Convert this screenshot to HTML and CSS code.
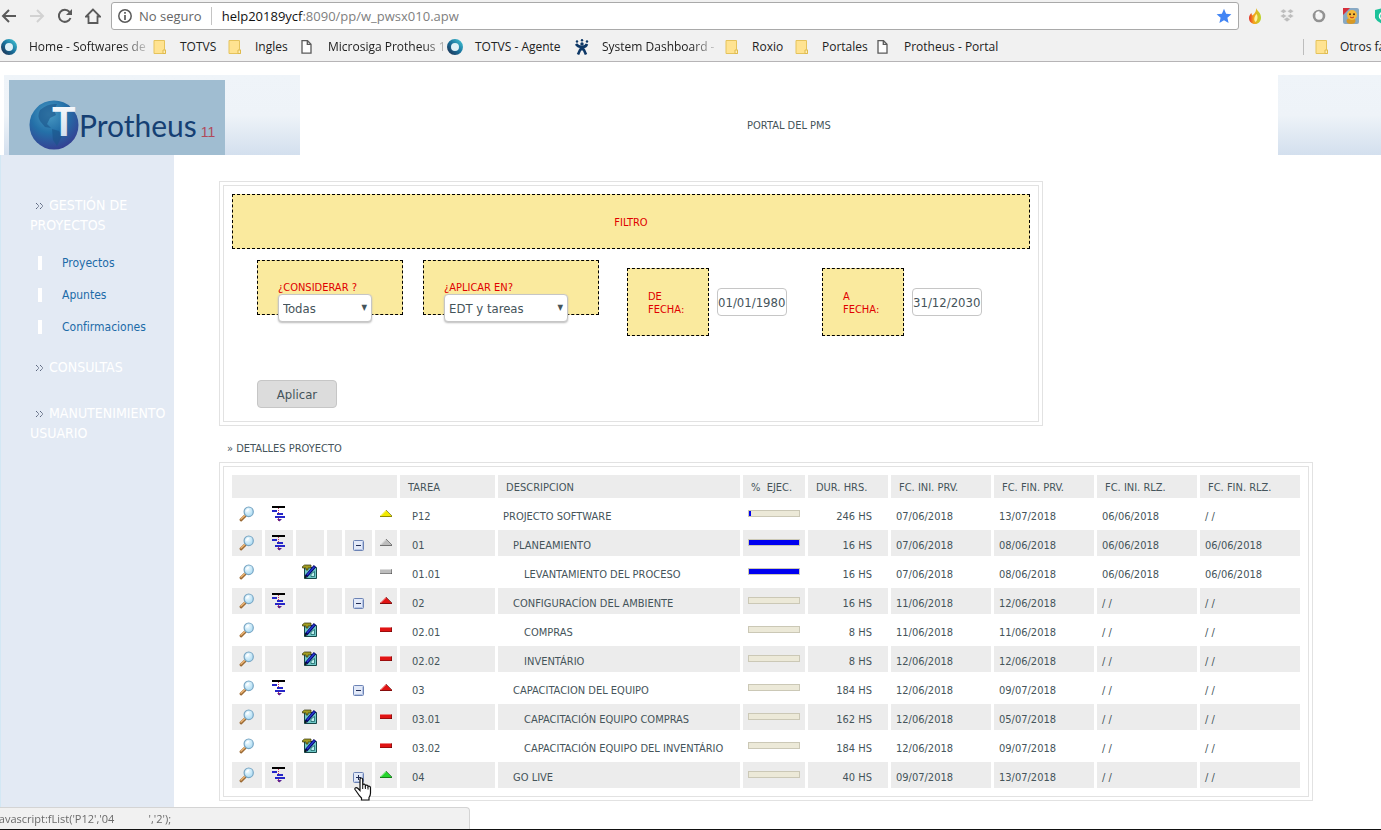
FILE: index.html
```html
<!DOCTYPE html>
<html lang="es">
<head>
  <meta charset="UTF-8">
  <meta name="viewport" content="width=device-width, initial-scale=1.0">
  <title>Portal del PMS</title>
  <link rel="stylesheet" href="styles.css">
</head>
<body>
  <svg class="sprite" aria-hidden="true">
    <defs>
      <radialGradient id="lens" cx="40%" cy="35%" r="70%">
        <stop offset="0" stop-color="#f4fcff"/>
        <stop offset="1" stop-color="#a5d8f2"/>
      </radialGradient>
      <radialGradient id="globe" cx="40%" cy="28%" r="75%">
        <stop offset="0" stop-color="#4a9bc4"/>
        <stop offset="0.5" stop-color="#2470a8"/>
        <stop offset="1" stop-color="#353f92"/>
      </radialGradient>
      <linearGradient id="ring" x1="0" y1="1" x2="1" y2="0">
        <stop offset="0" stop-color="#1d3a5c"/>
        <stop offset="0.5" stop-color="#19719c"/>
        <stop offset="1" stop-color="#3bb8cc"/>
      </linearGradient>
      <linearGradient id="flame" x1="0" y1="0" x2="1" y2="0">
        <stop offset="0" stop-color="#e2322c"/>
        <stop offset="0.4" stop-color="#f7a51c"/>
        <stop offset="1" stop-color="#b9d52a"/>
      </linearGradient>
      <linearGradient id="letter" x1="0" y1="0" x2="0" y2="1">
        <stop offset="0" stop-color="#ffffff"/>
        <stop offset="1" stop-color="#c9d9ea"/>
      </linearGradient>
    </defs>
    <symbol id="i-zoom" viewBox="0 0 16 16">
      <path d="M7.500 9.500L3 13.800" stroke="#9b6a35" stroke-width="3" stroke-linecap="round"/>
      <path d="M7.300 9L3 13" stroke="#eeb777" stroke-width="1.400" stroke-linecap="round"/>
      <ellipse cx="10.700" cy="5.800" rx="4.600" ry="4.800" fill="url(#lens)" stroke="#78a6c4" stroke-width="1.200"/>
      <path d="M8.500 5.500q.6-2 2.400-2.200" stroke="#fff" stroke-width="1.200" fill="none"/>
    </symbol>
    <symbol id="i-gantt" viewBox="0 0 16 16">
      <path d="M7.500 2v14" stroke="#c0305a" stroke-width="1" stroke-dasharray="1 1"/>
      <path d="M1 0h13v2H1z" fill="#000"/>
      <path d="M1 4h5v2H1zM6 7h6v2H6zM4 10h10v2H4z" fill="#2626c8"/>
      <path d="M6 13h5l-2.500 2.500z" fill="#5a2393"/>
    </symbol>
    <symbol id="i-edit" viewBox="0 0 16 16">
      <path d="M2.500 3.500h12v11h-12z" fill="#6fc8c8" stroke="#174848" stroke-width="1"/>
      <path d="M9 12.500v-2.500l3.500-2.500v5z" fill="#bdeeee" stroke="#1b6767" stroke-width=".8"/>
      <path d="M.5 2.500l2-1.500h6.500v3H6V6H4V4H.5z" fill="#a09c22" stroke="#33330a" stroke-width=".7"/>
      <path d="M4 12.500L13 2" stroke="#000060" stroke-width="3.200"/>
      <path d="M5 11L12.500 2.500" stroke="#2639d4" stroke-width="1.500"/>
      <path d="M2.500 14.500l.5-3 2.200 1.700z" fill="#111"/>
    </symbol>
    <symbol id="i-minus" viewBox="0 0 11 11">
      <rect x=".5" y=".5" width="10" height="10" rx="1" fill="#e2e9f8" stroke="#6c83b5"/>
      <path d="M1.500 9.500h8v-8" stroke="#b5c4e4" fill="none"/>
      <path d="M3 5.500h5" stroke="#222d55"/>
    </symbol>
    <symbol id="i-plus" viewBox="0 0 11 11">
      <rect x=".5" y=".5" width="10" height="10" rx="1" fill="#e2e9f8" stroke="#6c83b5"/>
      <path d="M1.500 9.500h8v-8" stroke="#b5c4e4" fill="none"/>
      <path d="M3 5.500h5M5.500 3v5" stroke="#222d55"/>
    </symbol>
    <symbol id="i-up" viewBox="0 0 12 7">
      <path d="M0 6L6 0l6 6v1H0z" fill="currentColor"/>
      <path d="M1 5.500L6 .6" stroke="#fff" stroke-opacity=".5" fill="none"/>
      <path d="M0 6.500h12M6 0l6 6" stroke="#000" stroke-opacity=".4" fill="none"/>
    </symbol>
    <symbol id="i-flat" viewBox="0 0 12 5">
      <path d="M0 0h12v5H0z" fill="currentColor"/>
      <path d="M0 .5h12" stroke="#fff" stroke-opacity=".45"/>
      <path d="M0 4.500h12M11.500 0v5" stroke="#000" stroke-opacity=".3"/>
    </symbol>
    <symbol id="i-folder" viewBox="0 0 16 16">
      <path d="M2 1.500h10.500v9l1 .5v3.500H2z" fill="#ffe391" stroke="#e5c35c"/>
      <path d="M11 14.500v-3.500h2.500v3.500z" fill="#ffeeb8" stroke="#dfba4d"/>
    </symbol>
    <symbol id="i-page" viewBox="0 0 16 16">
      <path d="M2 1.700h5.500l3.500 3.500v9H2z" fill="#fdfdfd" stroke="#5a5a5a" stroke-width="1.300"/>
      <path d="M7.300 1.700v3.700H11" fill="none" stroke="#5a5a5a" stroke-width="1.300"/>
    </symbol>
    <symbol id="i-totvs" viewBox="0 0 16 16">
      <circle cx="8" cy="8" r="6" fill="#dff1f7" stroke="url(#ring)" stroke-width="4"/>
    </symbol>
    <symbol id="i-chev" viewBox="0 0 9 8">
      <path d="M1 1l3 3-3 3M5 1l3 3-3 3" fill="none" stroke="#44506a" stroke-width="1" stroke-dasharray="1.200 .6"/>
    </symbol>
  </svg>

  <div class="browser">
    <div class="toolbar">
      <button type="button" class="tool" aria-label="Atrás"><svg viewBox="0 0 16 16"><path d="M15 8H2M8 2L2 8l6 6" fill="none" stroke="#5a5a5a" stroke-width="2"/></svg></button>
      <button type="button" class="tool" aria-label="Adelante"><svg viewBox="0 0 16 16"><path d="M1 8h13M8 2l6 6-6 6" fill="none" stroke="#d2d2d2" stroke-width="2"/></svg></button>
      <button type="button" class="tool" aria-label="Recargar"><svg viewBox="0 0 16 16"><path d="M13.500 10A6 6 0 1 1 12.500 4" fill="none" stroke="#5a5a5a" stroke-width="2"/><path d="M15 1v6H9z" fill="#5a5a5a"/></svg></button>
      <button type="button" class="tool" aria-label="Inicio"><svg viewBox="0 0 16 16"><path d="M8 1.500L1 8.500h2.500V15h9V8.500H15z" fill="none" stroke="#5a5a5a" stroke-width="1.800"/></svg></button>
      <div class="omnibox">
        <svg class="info" viewBox="0 0 14 14"><circle cx="7" cy="7" r="6.200" fill="none" stroke="#5a5a5a" stroke-width="1.500"/><path d="M7 6v5M7 3v1.800" stroke="#5a5a5a" stroke-width="1.700"/></svg>
        <span class="secure">No seguro</span>
        <label class="host" for="url">help20189ycf</label>
        <input id="url" class="url" type="text" value=":8090/pp/w_pwsx010.apw">
        <svg class="star" viewBox="0 0 16 16"><path d="M8 .8l2.100 4.900 5.300.5-4 3.500 1.200 5.200L8 12.200l-4.600 2.700 1.200-5.200-4-3.500 5.300-.5z" fill="#4285f4"/></svg>
      </div>
      <div class="extensions">
        <svg viewBox="0 0 16 16"><path d="M9 0c1 3 5 4.500 5 9.500C14 13.500 11.500 16 8 16s-6-2.500-6-6c0-2.500 1.500-4 2.500-5 0 1 .5 2 1 2.500C7.500 5.500 9.500 3.500 9 0z" fill="url(#flame)"/><path d="M9.500 6c1.500 2 1.500 6-1 8-2-2-1.500-5 1-8z" fill="#fff3a0"/></svg>
        <svg viewBox="0 0 16 16"><path d="M4.500 1L1 3.200 4.500 5.500 8 3.200zM11.500 1L8 3.200l3.500 2.300L15 3.200zM4.500 5.800L1 8l3.500 2.300L8 8zM11.500 5.800L8 8l3.500 2.300L15 8zM8 9l-3.500 2.300L8 14l3.500-2.700z" fill="#bdbdbd" stroke="#f1f1f1" stroke-width=".6"/></svg>
        <svg viewBox="0 0 16 16"><circle cx="8" cy="8" r="5" fill="#f4f4f4" stroke="#929292" stroke-width="2.600"/><path d="M5 6a3.500 3.500 0 0 1 3.500-2" stroke="#fff" stroke-width="1.500" fill="none"/></svg>
        <svg viewBox="0 0 16 16"><rect width="16" height="16" rx="2" fill="#88a9c4"/><path d="M0 0h7L0 7z" fill="#d62f3b"/><ellipse cx="8" cy="13" rx="4.500" ry="3" fill="#d99a26"/><circle cx="9" cy="7" r="5" fill="#f5b93b"/><circle cx="7" cy="6.300" r="1" fill="#4a2a10"/><circle cx="11" cy="6.300" r="1" fill="#4a2a10"/><path d="M7 9q2 1.800 4 0" stroke="#c23616" fill="none"/></svg>
        <svg viewBox="0 0 16 16"><path d="M0 2l8-2 8 2v8q-2 4-8 6-6-2-8-6z" fill="#1cc29a"/><circle cx="8" cy="8" r="3.500" fill="none" stroke="#fff" stroke-width="1.500"/></svg>
      </div>
    </div>
    <nav class="bookmarks">
      <a class="fade" href="#"><svg><use href="#i-totvs"/></svg><span>Home - Softwares de</span></a>
      <a href="#"><svg><use href="#i-folder"/></svg><span>TOTVS</span></a>
      <a href="#"><svg><use href="#i-folder"/></svg><span>Ingles</span></a>
      <a class="fade" href="#"><svg><use href="#i-page"/></svg><span>Microsiga Protheus 1</span></a>
      <a href="#"><svg><use href="#i-totvs"/></svg><span>TOTVS - Agente</span></a>
      <a class="fade" href="#"><svg viewBox="0 0 16 16"><path d="M2 5q2 3 6 3t5-3M4 15.500l2-4.500 6-4M12 15.500L10 11 4 7" fill="none" stroke="#0d3766" stroke-width="2.600"/><circle cx="3" cy="2.500" r="1.200" fill="#0d3766"/><circle cx="8" cy="1.300" r="1.200" fill="#0d3766"/><circle cx="8" cy="5" r="1.700" fill="#0d3766"/><circle cx="13" cy="2.500" r="1.200" fill="#0d3766"/></svg><span>System Dashboard -</span></a>
      <a href="#"><svg><use href="#i-folder"/></svg><span>Roxio</span></a>
      <a href="#"><svg><use href="#i-folder"/></svg><span>Portales</span></a>
      <a href="#"><svg><use href="#i-page"/></svg><span>Protheus - Portal</span></a>
      <a class="others" href="#"><svg><use href="#i-folder"/></svg><span>Otros favoritos</span></a>
    </nav>
  </div>

  <header class="top">
    <div class="top-left">
      <div class="logo">
        <svg class="globe" viewBox="0 0 50 50">
          <circle cx="25" cy="25" r="24.500" fill="url(#globe)"/>
          <path d="M11 10q8-7 17-6l-3 6 2 5-6 3-3 6 4 4-6-1-5-6q-3-5 0-11zM23 29l7 2 3 5-5 10-4-6z" fill="#1b5488" opacity=".6"/>
          <text x="23" y="36" class="globe-letter" fill="url(#letter)">T</text>
        </svg>
        <span class="logo-name">Protheus</span><span class="logo-version">11</span>
      </div>
    </div>
    <h1>PORTAL DEL PMS</h1>
    <div class="top-right"></div>
  </header>

  <div class="layout">
    <aside class="sidebar">
      <a class="group" href="#"><svg><use href="#i-chev"/></svg>GESTIÓN DE PROYECTOS</a>
      <ul>
        <li><a href="#">Proyectos</a></li>
        <li><a href="#">Apuntes</a></li>
        <li><a href="#">Confirmaciones</a></li>
      </ul>
      <a class="group" href="#"><svg><use href="#i-chev"/></svg>CONSULTAS</a>
      <a class="group" href="#"><svg><use href="#i-chev"/></svg>MANUTENIMIENTO USUARIO</a>
    </aside>

    <main>
      <form class="panel filter">
        <div class="panel-body">
          <div class="filter-title">FILTRO</div>
          <div class="filter-row">
            <div class="field">
              <label for="considerar">¿CONSIDERAR ?</label>
              <span class="select"><select id="considerar"><option>Todas</option></select></span>
            </div>
            <div class="field field-wide">
              <label for="aplicar">¿APLICAR EN?</label>
              <span class="select"><select id="aplicar"><option>EDT y tareas</option></select></span>
            </div>
            <div class="date">
              <label for="desde">DE FECHA:</label>
              <input id="desde" type="text" value="01/01/1980">
            </div>
            <div class="date">
              <label for="hasta">A FECHA:</label>
              <input id="hasta" type="text" value="31/12/2030">
            </div>
          </div>
          <button type="button" class="apply">Aplicar</button>
        </div>
      </form>

      <h2>» DETALLES PROYECTO</h2>

      <div class="panel details">
        <div class="panel-body">
          <table>
            <colgroup>
              <col class="c-zoom"><col class="c-tool"><col class="c-tool"><col class="c-gap"><col class="c-tree"><col class="c-state">
              <col class="c-task"><col><col class="c-exec"><col class="c-hours">
              <col class="c-date"><col class="c-date"><col class="c-date"><col class="c-date">
            </colgroup>
            <thead>
              <tr>
                <th colspan="6"></th>
                <th>TAREA</th><th>DESCRIPCION</th><th>%&nbsp; EJEC.</th><th>DUR. HRS.</th>
                <th>FC. INI. PRV.</th><th>FC. FIN. PRV.</th><th>FC. INI. RLZ.</th><th>FC. FIN. RLZ.</th>
              </tr>
            </thead>
            <tbody>
              <tr>
                <td class="ic"><a href="#" aria-label="Ver"><svg><use href="#i-zoom"/></svg></a></td>
                <td class="ic"><a href="#" aria-label="Gantt"><svg><use href="#i-gantt"/></svg></a></td>
                <td></td><td></td><td></td>
                <td class="state yellow"><svg class="up"><use href="#i-up"/></svg></td>
                <td class="task">P12</td><td>PROJECTO SOFTWARE</td>
                <td class="exec"><div class="bar"><div style="width: 4%"></div></div></td>
                <td class="hours">246 HS</td><td>07/06/2018</td><td>13/07/2018</td><td>06/06/2018</td><td>/ /</td>
              </tr>
              <tr>
                <td class="ic"><a href="#" aria-label="Ver"><svg><use href="#i-zoom"/></svg></a></td>
                <td class="ic"><a href="#" aria-label="Gantt"><svg><use href="#i-gantt"/></svg></a></td>
                <td></td><td></td>
                <td class="tree"><button type="button" aria-label="Contraer"><svg><use href="#i-minus"/></svg></button></td>
                <td class="state grey"><svg class="up"><use href="#i-up"/></svg></td>
                <td class="task">01</td><td class="level-1">PLANEAMIENTO</td>
                <td class="exec"><div class="bar"><div style="width: 100%"></div></div></td>
                <td class="hours">16 HS</td><td>07/06/2018</td><td>08/06/2018</td><td>06/06/2018</td><td>06/06/2018</td>
              </tr>
              <tr>
                <td class="ic"><a href="#" aria-label="Ver"><svg><use href="#i-zoom"/></svg></a></td>
                <td></td>
                <td class="ic"><a href="#" aria-label="Editar"><svg><use href="#i-edit"/></svg></a></td>
                <td></td><td></td>
                <td class="state grey"><svg class="flat"><use href="#i-flat"/></svg></td>
                <td class="task">01.01</td><td class="level-2">LEVANTAMIENTO DEL PROCESO</td>
                <td class="exec"><div class="bar"><div style="width: 100%"></div></div></td>
                <td class="hours">16 HS</td><td>07/06/2018</td><td>08/06/2018</td><td>06/06/2018</td><td>06/06/2018</td>
              </tr>
              <tr>
                <td class="ic"><a href="#" aria-label="Ver"><svg><use href="#i-zoom"/></svg></a></td>
                <td class="ic"><a href="#" aria-label="Gantt"><svg><use href="#i-gantt"/></svg></a></td>
                <td></td><td></td>
                <td class="tree"><button type="button" aria-label="Contraer"><svg><use href="#i-minus"/></svg></button></td>
                <td class="state red"><svg class="up"><use href="#i-up"/></svg></td>
                <td class="task">02</td><td class="level-1">CONFIGURACÍON DEL AMBIENTE</td>
                <td class="exec"><div class="bar"></div></td>
                <td class="hours">16 HS</td><td>11/06/2018</td><td>12/06/2018</td><td>/ /</td><td>/ /</td>
              </tr>
              <tr>
                <td class="ic"><a href="#" aria-label="Ver"><svg><use href="#i-zoom"/></svg></a></td>
                <td></td>
                <td class="ic"><a href="#" aria-label="Editar"><svg><use href="#i-edit"/></svg></a></td>
                <td></td><td></td>
                <td class="state red"><svg class="flat"><use href="#i-flat"/></svg></td>
                <td class="task">02.01</td><td class="level-2">COMPRAS</td>
                <td class="exec"><div class="bar"></div></td>
                <td class="hours">8 HS</td><td>11/06/2018</td><td>11/06/2018</td><td>/ /</td><td>/ /</td>
              </tr>
              <tr>
                <td class="ic"><a href="#" aria-label="Ver"><svg><use href="#i-zoom"/></svg></a></td>
                <td></td>
                <td class="ic"><a href="#" aria-label="Editar"><svg><use href="#i-edit"/></svg></a></td>
                <td></td><td></td>
                <td class="state red"><svg class="flat"><use href="#i-flat"/></svg></td>
                <td class="task">02.02</td><td class="level-2">INVENTÁRIO</td>
                <td class="exec"><div class="bar"></div></td>
                <td class="hours">8 HS</td><td>12/06/2018</td><td>12/06/2018</td><td>/ /</td><td>/ /</td>
              </tr>
              <tr>
                <td class="ic"><a href="#" aria-label="Ver"><svg><use href="#i-zoom"/></svg></a></td>
                <td class="ic"><a href="#" aria-label="Gantt"><svg><use href="#i-gantt"/></svg></a></td>
                <td></td><td></td>
                <td class="tree"><button type="button" aria-label="Contraer"><svg><use href="#i-minus"/></svg></button></td>
                <td class="state red"><svg class="up"><use href="#i-up"/></svg></td>
                <td class="task">03</td><td class="level-1">CAPACITACION DEL EQUIPO</td>
                <td class="exec"><div class="bar"></div></td>
                <td class="hours">184 HS</td><td>12/06/2018</td><td>09/07/2018</td><td>/ /</td><td>/ /</td>
              </tr>
              <tr>
                <td class="ic"><a href="#" aria-label="Ver"><svg><use href="#i-zoom"/></svg></a></td>
                <td></td>
                <td class="ic"><a href="#" aria-label="Editar"><svg><use href="#i-edit"/></svg></a></td>
                <td></td><td></td>
                <td class="state red"><svg class="flat"><use href="#i-flat"/></svg></td>
                <td class="task">03.01</td><td class="level-2">CAPACITACIÓN EQUIPO COMPRAS</td>
                <td class="exec"><div class="bar"></div></td>
                <td class="hours">162 HS</td><td>12/06/2018</td><td>05/07/2018</td><td>/ /</td><td>/ /</td>
              </tr>
              <tr>
                <td class="ic"><a href="#" aria-label="Ver"><svg><use href="#i-zoom"/></svg></a></td>
                <td></td>
                <td class="ic"><a href="#" aria-label="Editar"><svg><use href="#i-edit"/></svg></a></td>
                <td></td><td></td>
                <td class="state red"><svg class="flat"><use href="#i-flat"/></svg></td>
                <td class="task">03.02</td><td class="level-2">CAPACITACIÓN EQUIPO DEL INVENTÁRIO</td>
                <td class="exec"><div class="bar"></div></td>
                <td class="hours">184 HS</td><td>12/06/2018</td><td>09/07/2018</td><td>/ /</td><td>/ /</td>
              </tr>
              <tr>
                <td class="ic"><a href="#" aria-label="Ver"><svg><use href="#i-zoom"/></svg></a></td>
                <td class="ic"><a href="#" aria-label="Gantt"><svg><use href="#i-gantt"/></svg></a></td>
                <td></td><td></td>
                <td class="tree">
                  <button type="button" aria-label="Expandir"><svg><use href="#i-plus"/></svg></button>
                  <svg class="pointer" viewBox="0 0 18 24"><path d="M6 13.500V2.500Q6 1 7.300 1T8.700 2.500V8q.4-1 1.500-.8 1.200.2 1.200 1.500.5-.8 1.500-.6 1.100.3 1.100 1.500.6-.6 1.500-.3 1 .4 1 1.700V16q0 2.500-1.500 4.500V23H7.500v-2Q5 18.500 3.500 16 2 13.800 1 12.500q-.5-1.300.6-1.800 1.200-.4 2.400.8z" fill="#fff" stroke="#111" stroke-width="1.200"/><path d="M8.700 8v4M11.400 9v3M14 10v2.500" stroke="#111"/></svg>
                </td>
                <td class="state green"><svg class="up"><use href="#i-up"/></svg></td>
                <td class="task">04</td><td class="level-1">GO LIVE</td>
                <td class="exec"><div class="bar"></div></td>
                <td class="hours">40 HS</td><td>09/07/2018</td><td>13/07/2018</td><td>/ /</td><td>/ /</td>
              </tr>
            </tbody>
          </table>
        </div>
      </div>
    </main>
  </div>

  <div class="status"><span>javascript:fList('P12','04            ','2');</span></div>
</body>
</html>
```
FILE: styles.css
```css
:root {
  --ui-font: "Open Sans", "Noto Sans", sans-serif;
  --page-font: "DejaVu Sans Condensed", "Noto Sans", sans-serif;
  --text: #45545a;
  --line: #e2e2e2;
  --cell: #ececec;
  --yellow: #faea9e;
  --red: #e00000;
}
* {
  box-sizing: border-box;
  margin: 0;
  padding: 0;
}
body {
  display: flex;
  flex-direction: column;
  min-height: 100vh;
  border-bottom: 1px solid #111;
  overflow-x: hidden;
  background: #fff;
  color: var(--text);
  font-family: var(--page-font);
  font-size: 11px;
  line-height: 13px;
}
a {
  color: inherit;
  text-decoration: none;
}
button {
  border: 0;
  background: none;
  cursor: pointer;
}
svg {
  display: block;
  flex: none;
}
.sprite {
  position: absolute;
  width: 0;
  height: 0;
}

/* browser bars */
.browser {
  height: 62px;
  background: #f1f1f1;
  border-bottom: 1px solid #b6b4b6;
  font-family: var(--ui-font);
}
.toolbar {
  display: flex;
  align-items: center;
  gap: 12px;
  height: 32px;
  padding-left: 1px;
}
.tool svg {
  width: 16px;
  height: 16px;
}
.omnibox {
  flex: 1;
  display: flex;
  align-items: center;
  height: 28px;
  padding: 0 6px;
  margin-left: -2px;
  border: 1px solid #a9a9a9;
  border-radius: 3px;
  background: #fff;
  font-size: 13px;
  line-height: 18px;
}
.info {
  width: 14px;
  height: 14px;
}
.secure {
  margin-left: 7px;
  padding-right: 9px;
  border-right: 1px solid #c4c4c4;
  color: #666;
}
.host {
  margin-left: 10px;
  color: #111;
}
.url {
  flex: 1;
  border: 0;
  outline: 0;
  background: none;
  font: inherit;
  color: #808080;
}
.star {
  width: 16px;
  height: 16px;
}
.extensions {
  display: flex;
  gap: 16px;
  width: 134px;
  margin-left: -4px;
}
.extensions svg {
  width: 16px;
  height: 16px;
}
.bookmarks {
  display: grid;
  grid-template-columns: 151px 75px 73px 147px 127px 150px 70px 82px 1fr 78px;
  align-items: center;
  height: 29px;
  padding-left: 1px;
  color: #222;
  font-size: 12px;
  line-height: 16px;
  white-space: nowrap;
}
.bookmarks a {
  display: flex;
  align-items: center;
  gap: 12px;
}
.bookmarks svg {
  width: 16px;
  height: 16px;
}
.fade span {
  -webkit-mask-image: linear-gradient(to right, #000 80%, rgba(0, 0, 0, 0.2));
  mask-image: linear-gradient(to right, #000 80%, rgba(0, 0, 0, 0.2));
}
.bookmarks .others {
  gap: 10px;
  padding-left: 10px;
  border-left: 1px solid #bdbdbd;
}

/* header */
.top {
  display: flex;
  align-items: center;
  height: 80px;
  margin-top: 13px;
}
.top-left,
.top-right {
  height: 80px;
  background: linear-gradient(#eff4f9, #eef3f8 50%, #d3dfee);
}
.top-left {
  width: 296px;
  margin-left: 4px;
  padding: 5px 0 0 5px;
}
.top-right {
  width: 103px;
}
.top h1 {
  flex: 1;
  margin-top: 20px;
  text-align: center;
  font-size: 11px;
  font-weight: normal;
}
.logo {
  display: flex;
  align-items: baseline;
  width: 216px;
  height: 75px;
  padding: 20px 0 0 20px;
  background: #a0bdd1;
  font-family: Lato, sans-serif;
}
.globe {
  width: 50px;
  height: 50px;
  align-self: flex-start;
}
.globe-letter {
  font-family: Lato, sans-serif;
  font-size: 39px;
  font-weight: 900;
}
.logo-name {
  color: #153f73;
  font-size: 30px;
  line-height: 50px;
}
.logo-version {
  margin-left: 4px;
  color: #b04a5a;
  font-family: "Liberation Sans", sans-serif;
  font-size: 14px;
}

/* menu */
.layout {
  flex: 1;
  display: flex;
}
.sidebar {
  flex: none;
  width: 174px;
  padding: 40px 0 0 29px;
  border-left: 1px solid #d3e8f4;
  background: #e3eaf4;
}
.group {
  display: block;
  color: #fff;
  font-size: 14px;
  line-height: 20px;
}
.group svg {
  display: inline-block;
  width: 9px;
  height: 8px;
  margin: 0 5px;
}
.group + .group {
  margin-top: 26px;
}
.sidebar ul {
  margin: 12px 0 14px 8px;
  list-style: none;
}
.sidebar li {
  display: flex;
  align-items: center;
  gap: 20px;
  height: 32px;
}
.sidebar li::before {
  content: "";
  width: 4px;
  height: 14px;
  background: #fff;
}
.sidebar li a {
  color: #1c6ba8;
  font-size: 12px;
}

/* filter */
main {
  flex: 1;
  padding: 26px 68px 0 45px;
}
.panel {
  padding: 3px;
  border: 1px solid var(--line);
}
.panel-body {
  padding: 5px;
  border: 1px solid var(--line);
}
.filter {
  max-width: 824px;
}
.filter .panel-body {
  padding: 8px 8px 13px;
}
.filter-title,
.field,
.date label {
  border: 1px dashed #000;
  background: var(--yellow);
  color: var(--red);
}
.filter-title {
  padding: 21px 20px 19px;
  text-align: center;
}
.filter-row {
  display: flex;
  align-items: flex-start;
  padding: 11px 0 0 25px;
}
.field {
  width: 146px;
  height: 55px;
  margin-right: 20px;
  padding: 20px;
}
.field-wide {
  width: 176px;
  margin-right: 28px;
}
.field label {
  display: block;
}
.select {
  position: relative;
  display: block;
  width: 94px;
}
.field-wide .select {
  width: 124px;
}
.select::after {
  content: "▼";
  position: absolute;
  right: 5px;
  top: 7px;
  color: var(--text);
  font-size: 8px;
  pointer-events: none;
}
select,
.date input,
.apply {
  height: 28px;
  border: 1px solid #c6c6c6;
  border-radius: 4px;
  background: #fff;
  color: var(--text);
  font-family: var(--page-font);
  font-size: 13px;
}
select {
  width: 100%;
  padding: 0 4px;
  appearance: none;
  box-shadow: 0 1px 2px #bbb;
}
.date {
  display: flex;
  align-items: center;
  gap: 8px;
  margin: 8px 35px 0 0;
}
.date label {
  width: 82px;
  padding: 21px 20px 19px;
}
.date input {
  width: 70px;
}
.apply {
  display: block;
  width: 80px;
  margin: 44px 0 0 25px;
  background: #dcdcdc;
}

/* details */
h2 {
  padding: 16px 8px 7px;
  font-size: 11px;
  font-weight: normal;
}
table {
  width: 100%;
  table-layout: fixed;
  border-spacing: 3px;
}
.c-zoom { width: 30px; }
.c-tool { width: 28px; }
.c-gap { width: 15px; }
.c-tree { width: 27px; }
.c-state { width: 22px; }
.c-task { width: 95px; }
.c-exec { width: 62px; }
.c-hours { width: 80px; }
.c-date { width: 100px; }
th {
  height: 23px;
  padding: 2px 8px 0;
  background: var(--cell);
  font-weight: normal;
  text-align: left;
  white-space: nowrap;
}
td {
  height: 26px;
  padding: 9px 5px 0;
  vertical-align: top;
  white-space: nowrap;
}
tbody tr:nth-child(even) td {
  background: var(--cell);
}
td.ic {
  padding: 5px 0 0 6px;
}
.ic svg {
  width: 16px;
  height: 16px;
}
td.tree {
  position: relative;
  padding: 10px 8px 0;
}
.tree button,
.tree button svg {
  display: block;
  width: 11px;
  height: 11px;
}
.pointer {
  position: absolute;
  left: 9px;
  top: 15px;
  width: 18px;
  height: 24px;
}
td.state {
  padding: 9px 5px 0;
}
.up {
  width: 12px;
  height: 7px;
}
.flat {
  width: 12px;
  height: 5px;
  margin-top: 1px;
}
.yellow { color: #f2ea00; }
.grey { color: #bdbdbd; }
.red { color: #e01414; }
.green { color: #25d52c; }
td.task {
  padding-left: 12px;
}
td.level-1 {
  padding-left: 15px;
}
td.level-2 {
  padding-left: 26px;
}
td.hours {
  padding-right: 16px;
  text-align: right;
}
.bar {
  width: 52px;
  height: 7px;
  border: 1px solid #cbc8b6;
  background: #ece9d8;
}
.bar div {
  height: 5px;
  background: #0000f0;
}

/* link preview */
.status {
  position: fixed;
  left: 0;
  bottom: 1px;
  display: flex;
  width: 470px;
  height: 22px;
  padding-top: 3px;
  border: 1px solid #d4d4d4;
  border-width: 1px 1px 0 0;
  border-radius: 0 4px 0 0;
  background: #f1f1f1;
  color: #6a6a6a;
  font-family: var(--ui-font);
  font-size: 11px;
  line-height: 16px;
  white-space: pre;
}
.status span {
  margin-left: -4px;
}
```
